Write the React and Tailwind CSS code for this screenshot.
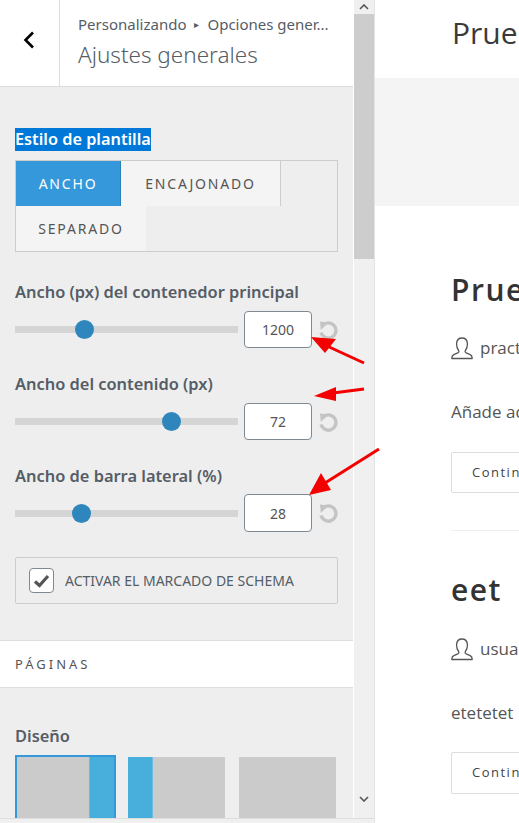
// Customizer panel with the site preview next to it
const panelFont = "font-['Noto_Sans','Open_Sans',sans-serif]";

function ResetIcon() {
    return (
        <svg width="19" height="20" viewBox="0 0 19 20" fill="none" className="shrink-0">
            <path d="M5 4.300A7.600 7.600 0 1 1 2 12.500" stroke="#c4c4c4" strokeWidth="3.400" />
            <path d="M1 1.600 L9.400 2.600 L1.800 10 Z" fill="#c4c4c4" />
        </svg>
    );
}

function UserIcon() {
    return (
        <svg width="22" height="23" viewBox="0 0 22 23" fill="none" className="shrink-0">
            <path
                d="M7.6 13.5C5.8 11 5.4 8.8 5.6 6.4 5.900 3 8.200 1 11 1s5.100 2 5.400 5.400c.2 2.400-.2 4.600-2 7.100-.6.9-.3 1.900.8 2.400l4 1.700c1.500.7 2.100 1.800 2 3.900H.8c-.1-2.100.5-3.200 2-3.900l4-1.700c1.100-.5 1.400-1.500.8-2.400Z"
                stroke="#555"
                strokeWidth="1.3"
                strokeLinejoin="round"
            />
        </svg>
    );
}

function RangeRow({ label, value, thumb, labelClass, inputClass, boxClass }) {
    return (
        <div className={labelClass}>
            <div className="text-[16.4px] leading-[22px] font-semibold text-[#555d66] whitespace-nowrap">{label}</div>
            <div className={`flex items-center ${inputClass}`}>
                <div className="relative w-[223px] h-[7px] shrink-0 bg-[#d5d5d5]">
                    <div
                        className="absolute top-[-6px] w-[19px] h-[19px] rounded-full bg-[#2e86bc]"
                        style={{ left: thumb - 9.5 }}
                    />
                </div>
                <div className={`ml-[6px] w-[68px] shrink-0 flex items-center justify-center bg-white border border-[#7e8993] rounded-[4px] text-[14px] text-[#555] ${boxClass}`}>
                    {value}
                </div>
                <div className="ml-[7px]">
                    <ResetIcon />
                </div>
            </div>
        </div>
    );
}

function LayoutThumb({ sidebar, selected, className }) {
    return (
        <div
            className={`h-[63px] flex bg-[#cbcbcb] ${className} ${
                selected ? 'border-2 border-b-0 border-[#3498db]' : ''
            }`}
        >
            {sidebar === 'left' && <div className="w-[25px] bg-[#48aedb] border-r border-[#6cbce0]" />}
            <div className="flex-1" />
            {sidebar === 'right' && <div className="w-[25px] bg-[#48aedb] border-l border-[#6cbce0]" />}
        </div>
    );
}

function Sidebar() {
    return (
        <aside className={`w-[353px] h-[818px] shrink-0 bg-[#eeeeee] overflow-hidden ${panelFont}`}>
            {/* Header */}
            <header className="h-[87px] flex bg-white border-b border-[#dddddd]">
                <div className="w-[60px] shrink-0 border-r border-[#dddddd] flex justify-center pt-[31px]">
                    <svg width="12" height="18" viewBox="0 0 12 18" fill="none" className="mr-[2px]">
                        <path d="M10 1.500 L2.500 9 L10 16.500" stroke="#000" strokeWidth="2.600" />
                    </svg>
                </div>
                <div className="pl-[18px] pt-[13px] text-[#555d66]">
                    <div className="flex items-center text-[15px] leading-[22px] whitespace-nowrap">
                        <span>Personalizando</span>
                        <span className="mx-[8px] text-[10px]">▸</span>
                        <span>Opciones gener...</span>
                    </div>
                    <div className="mt-[5px] text-[22.500px] leading-[30px] font-light">Ajustes generales</div>
                </div>
            </header>

            <div className="px-[15px]">
                {/* Estilo de plantilla */}
                <div className="mt-[41px] h-[23px] w-fit bg-[#0078d7] text-white text-[16.300px] leading-[23px] font-semibold">
                    Estilo de plantilla
                </div>
                <div className="mt-[9px] w-[323px] h-[92px] border border-[#cccccc] flex flex-wrap content-start text-[14px] tracking-[1.800px]">
                    <div className="w-[105px] h-[45px] flex items-center justify-center bg-[#3498db] text-white border-r border-[#2b7fb8]">
                        ANCHO
                    </div>
                    <div className="w-[160px] h-[45px] flex items-center justify-center bg-[#f4f4f4] text-[#555] border-r border-[#cccccc]">
                        ENCAJONADO
                    </div>
                    <div className="w-[130px] h-[45px] flex items-center justify-center bg-[#f4f4f4] text-[#555]">
                        SEPARADO
                    </div>
                </div>

                {/* Sliders */}
                <RangeRow label="Ancho (px) del contenedor principal" value="1200" thumb={69.5} labelClass="mt-[29px]" inputClass="mt-[8px]" boxClass="h-[37px]" />
                <RangeRow label="Ancho del contenido (px)" value="72" thumb={156.5} labelClass="mt-[25px]" inputClass="mt-[8px]" boxClass="h-[37px]" />
                <RangeRow label="Ancho de barra lateral (%)" value="28" thumb={66.5} labelClass="mt-[25px]" inputClass="mt-[7px]" boxClass="h-[38px]" />

                {/* Schema */}
                <div className="mt-[25px] w-[323px] h-[47px] flex items-center pl-[13px] border border-[#cccccc] rounded-[2px]">
                    <div className="w-[25px] h-[25px] flex items-center justify-center bg-white border border-[#7e8993] rounded-[4px]">
                        <svg width="17" height="14" viewBox="0 0 17 14" fill="none">
                            <path d="M2 7.500 L6.500 11.500 L15 2" stroke="#555" strokeWidth="3.200" />
                        </svg>
                    </div>
                    <span className="ml-[11px] text-[14px] text-[#555d66] whitespace-nowrap">ACTIVAR EL MARCADO DE SCHEMA</span>
                </div>
            </div>

            {/* Paginas */}
            <div className="mt-[36px] h-[48px] flex items-center px-[15px] pt-[2px] bg-white border-y border-[#dddddd] text-[13px] tracking-[3px] text-[#555]">
                PÁGINAS
            </div>
            <div className="px-[15px]">
                <div className="mt-[37px] text-[16.400px] leading-[22px] font-semibold text-[#555d66]">Diseño</div>
                <div className="mt-[8px] flex">
                    <LayoutThumb sidebar="right" selected className="w-[101px]" />
                    <LayoutThumb sidebar="left" className="w-[97px] ml-[12px] mt-[2px]" />
                    <LayoutThumb className="w-[97px] ml-[14px] mt-[2px]" />
                </div>
            </div>
        </aside>
    );
}

function Scrollbar() {
    return (
        <div className="w-[22px] h-[818px] shrink-0 flex flex-col items-center bg-[#f0f0f0] border-l border-white border-r border-r-[#e4e4e4]">
            <div className="h-[14px] flex items-center">
                <svg width="10" height="6" viewBox="0 0 10 6" fill="none">
                    <path d="M1 5 L5 1 L9 5" stroke="#555" strokeWidth="1.600" />
                </svg>
            </div>
            <div className="w-full h-[245px] bg-[#cdcdcd]" />
            <div className="flex-1" />
            <div className="h-[22px] flex items-start">
                <svg width="10" height="6" viewBox="0 0 10 6" fill="none">
                    <path d="M1 1 L5 5 L9 1" stroke="#555" strokeWidth="1.600" />
                </svg>
            </div>
        </div>
    );
}

function PostButton({ className }) {
    return (
        <div className={`w-[200px] flex items-center pl-[20px] border border-[#dddddd] rounded-[2px] text-[13px] tracking-[1.500px] text-[#444] ${className}`}>
            Continuar leyendo
        </div>
    );
}

function Preview() {
    return (
        <main className="flex-1 min-w-0 h-[823px] overflow-hidden bg-white font-['Open_Sans',sans-serif] whitespace-nowrap">
            <div className="h-[78px] pl-[77px] pt-[11px] text-[30px] leading-[44px] text-[#3a3a3a]">Prueba</div>
            <div className="h-[128px] bg-[#f4f4f4]" />
            <div className="pl-[76px]">
                <div className="mt-[63px] text-[30px] leading-[42px] font-semibold tracking-[1.500px] text-[#333]">Prueba</div>
                <div className="mt-[25px] flex items-center h-[24px] text-[17px] text-[#555]">
                    <UserIcon />
                    <span className="ml-[7px]">practicante</span>
                </div>
                <div className="mt-[40px] text-[17px] leading-[24px] text-[#555]">Añade aquí</div>
                <PostButton className="mt-[28px] h-[41px]" />
                <div className="mt-[37px] h-px w-[200px] bg-[#eeeeee]" />
                <div className="mt-[38px] text-[30px] leading-[42px] font-semibold tracking-[1.500px] text-[#333]">eet</div>
                <div className="mt-[26px] flex items-center h-[24px] text-[17px] text-[#555]">
                    <UserIcon />
                    <span className="ml-[7px]">usuario</span>
                </div>
                <div className="mt-[40px] text-[17px] leading-[24px] text-[#555]">etetetet</div>
                <PostButton className="mt-[27px] h-[42px]" />
            </div>
        </main>
    );
}

// Red annotation arrows drawn over the screenshot
function Arrows() {
    return (
        <svg width="519" height="823" viewBox="0 0 519 823" fill="none" className="absolute inset-0 pointer-events-none">
            <path d="M364 363 L327 346" stroke="#f50000" strokeWidth="3" />
            <path d="M311 337 L336 339 L325 353 Z" fill="#f50000" />
            <path d="M364 389 L333 393" stroke="#f50000" strokeWidth="3" />
            <path d="M314 396 L336 387 L336 401 Z" fill="#f50000" />
            <path d="M379 449 L325 483" stroke="#f50000" strokeWidth="3" />
            <path d="M309 495 L321 473 L331 490 Z" fill="#f50000" />
        </svg>
    );
}

export default function App() {
    return (
        <div className="relative w-[519px] h-[823px] overflow-hidden bg-white">
            <div className="flex h-full">
                <div className="w-[375px] shrink-0 h-[823px] bg-[#f0f0f0] border-r border-[#e4e4e4]">
                    <div className="flex h-[818px] border-b border-[#dddddd] box-content">
                        <Sidebar />
                        <Scrollbar />
                    </div>
                </div>
                <Preview />
            </div>
            <Arrows />
        </div>
    );
}
